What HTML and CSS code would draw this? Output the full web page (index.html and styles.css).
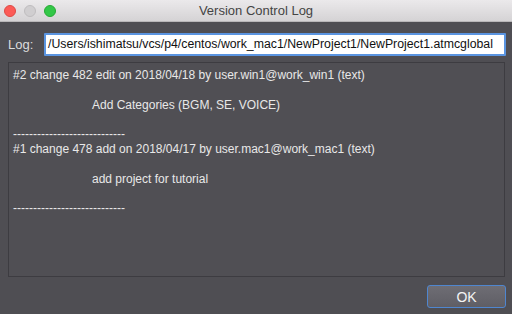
FILE: index.html
```html
<!DOCTYPE html>
<html>
<head>
<meta charset="utf-8">
<link rel="stylesheet" href="styles.css">
</head>
<body>
<div class="window">
  <div class="titlebar">
    <div class="lights">
      <span class="light red"></span>
      <span class="light gray"></span>
      <span class="light green"></span>
    </div>
    <div class="title">Version Control Log</div>
  </div>
  <div class="content">
    <div class="logrow">
      <span class="label">Log:</span>
      <div class="input">/Users/ishimatsu/vcs/p4/centos/work_mac1/NewProject1/NewProject1.atmcglobal</div>
    </div>
    <div class="panel">
      <div class="line">#2 change 482 edit on 2018/04/18 by user.win1@work_win1 (text)</div>
      <div class="line"></div>
      <div class="line indent">Add Categories (BGM, SE, VOICE)</div>
      <div class="line"></div>
      <div class="line">----------------------------</div>
      <div class="line">#1 change 478 add on 2018/04/17 by user.mac1@work_mac1 (text)</div>
      <div class="line"></div>
      <div class="line indent">add project for tutorial</div>
      <div class="line"></div>
      <div class="line">----------------------------</div>
    </div>
    <div class="footer">
      <button class="ok">OK</button>
    </div>
  </div>
</div>
</body>
</html>
```

FILE: styles.css
```css
html, body {
  margin: 0;
  padding: 0;
}
body {
  width: 512px;
  height: 314px;
  overflow: hidden;
  font-family: "Liberation Sans", Arial, sans-serif;
  background: #4f4e53;
}
.window {
  display: flex;
  flex-direction: column;
  height: 314px;
}
.titlebar {
  height: 22px;
  display: flex;
  align-items: center;
  justify-content: center;
  position: relative;
  background: linear-gradient(#ebe9eb, #d5d3d5);
  border-bottom: 1px solid #b9b7b9;
  box-sizing: border-box;
}
.lights {
  position: absolute;
  left: 4px;
  top: 5px;
  display: flex;
  gap: 8px;
}
.light {
  width: 12px;
  height: 12px;
  border-radius: 50%;
  box-sizing: border-box;
}
.red { background: #fc5b57; border: 1px solid #de4a45; }
.gray { background: #d0ced0; border: 1px solid #bfbdbf; }
.green { background: #33c748; border: 1px solid #27aa35; }
.title {
  font-size: 13px;
  color: #444;
}
.content {
  flex: 1;
  display: flex;
  flex-direction: column;
  padding: 11px 6px 0 8px;
}
.logrow {
  display: flex;
  align-items: center;
  height: 23px;
}
.label {
  width: 36px;
  font-size: 13px;
  color: #dcdcdc;
}
.input {
  flex: 1;
  height: 23px;
  box-sizing: border-box;
  background: #ffffff;
  border: 2px solid #5a94e0;
  border-radius: 1px;
  padding: 0 2px;
  font-size: 12.3px;
  line-height: 19px;
  color: #111;
  white-space: nowrap;
  overflow: hidden;
}
.panel {
  margin-top: 6px;
  margin-right: 1px;
  height: 215px;
  box-sizing: border-box;
  border: 1px solid #3d3c41;
  background: #504f54;
  padding: 5px 4px;
  color: #e8e8e8;
  font-size: 12px;
}
.line {
  height: 14.8px;
  line-height: 14.8px;
  white-space: pre;
}
.indent {
  padding-left: 79px;
}
.footer {
  display: flex;
  justify-content: flex-end;
  margin-top: 8px;
}
.ok {
  width: 79px;
  height: 23px;
  box-sizing: border-box;
  border: 1px solid #4f86cf;
  border-radius: 3px;
  background: linear-gradient(#6e6d74, #5f5e65);
  color: #f4f4f4;
  font-family: "Liberation Sans", Arial, sans-serif;
  font-size: 14px;
  padding: 0;
}
```
